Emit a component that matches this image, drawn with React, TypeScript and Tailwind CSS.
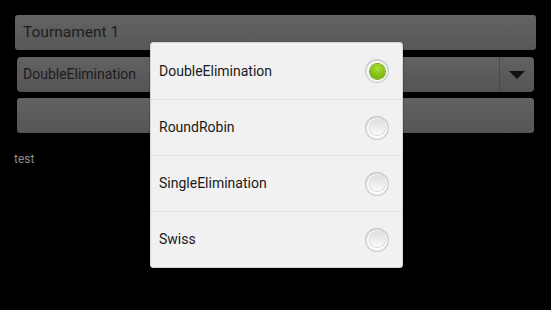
import { useState } from "react";

const OPTIONS = ["DoubleElimination", "RoundRobin", "SingleElimination", "Swiss"];

function Radio({ checked }: { checked: boolean }) {
	return (
		<div className="flex size-[24px] items-center justify-center rounded-full bg-[linear-gradient(#d2d2d2,#f4f4f4)] shadow-[inset_0_0_0_1px_#cdcdcd]">
			<div className="flex size-[20px] items-center justify-center rounded-full bg-[#fbfbfb]">
				<div
					className={
						checked
							? "size-[15px] rounded-full bg-[radial-gradient(circle_at_50%_30%,#a8e22e,#7ab412_70%)] shadow-[0_0_0_1px_#6ea80f]"
							: "size-[15px] rounded-full bg-[linear-gradient(#dedede,#fafafa)] shadow-[0_0_0_1px_#d4d4d4]"
					}
				/>
			</div>
		</div>
	);
}

export default function App() {
	const [choice, setChoice] = useState(OPTIONS[0]);

	return (
		<div className="relative h-[310px] w-[551px] overflow-hidden bg-black font-['Roboto',sans-serif]">
			<div className="flex flex-col pt-[15px]">
				<div className="ml-[15px] flex h-[35px] w-[521px] items-center rounded-[3px] bg-[linear-gradient(#636363,#575757)] pl-[8px] text-[15.5px] text-[#1c1c1c]">
					Tournament 1
				</div>
				<div className="ml-[17px] mt-[7px] flex h-[35px] w-[517px] rounded-[4px] bg-[linear-gradient(#626262,#545454)] text-[14px] text-[#1c1c1c]">
					<div className="flex flex-1 items-center pl-[6px]">{choice}</div>
					<div className="flex w-[35px] items-center justify-center border-l border-[#4a4a4a]">
						<div className="h-0 w-0 border-x-[8px] border-t-[8px] border-x-transparent border-t-[#111]" />
					</div>
				</div>
				<div className="ml-[17px] mt-[6px] h-[35px] w-[517px] rounded-[3px] bg-[linear-gradient(#626262,#555555)]" />
				<div className="ml-[14px] mt-[17px] text-[12px] text-[#8a8a8a]">test</div>
			</div>

			<div className="absolute left-[150px] top-[42px] w-[253px] overflow-hidden rounded-[3px] border border-[#d4d4d4] bg-[#f1f1f1] shadow-[0_1px_2px_rgba(0,0,0,0.5)]">
				{OPTIONS.map((opt, i) => (
					<button
						key={opt}
						type="button"
						onClick={() => setChoice(opt)}
						className={
							"flex h-[56px] w-full items-center justify-between pl-[8px] pr-[13px] text-left text-[14px] text-[#1a1a1a] " +
							(i > 0 ? "border-t border-[#e2e2e2]" : "")
						}
					>
						<span>{opt}</span>
						<Radio checked={choice === opt} />
					</button>
				))}
			</div>
		</div>
	);
}
